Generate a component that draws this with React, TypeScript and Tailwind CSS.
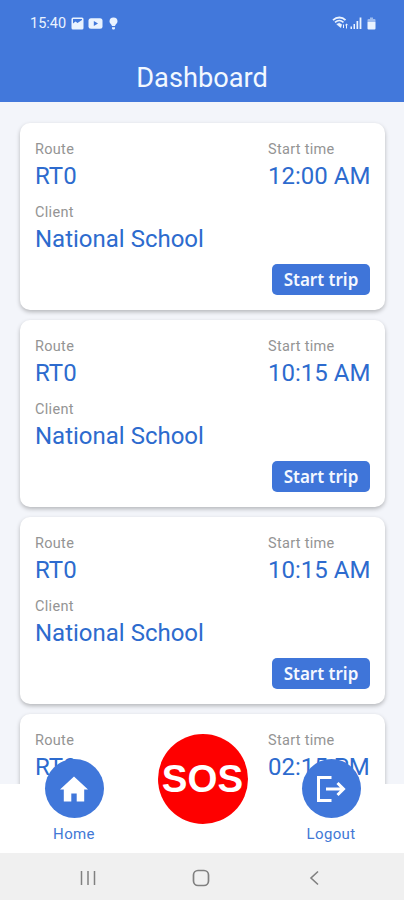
import type { ReactNode } from "react";

type Trip = {
  id: number;
  route: string;
  client: string;
  startTime: string;
};

const TRIPS: Trip[] = [
  { id: 1, route: "RT0", client: "National School", startTime: "12:00 AM" },
  { id: 2, route: "RT0", client: "National School", startTime: "10:15 AM" },
  { id: 3, route: "RT0", client: "National School", startTime: "10:15 AM" },
  { id: 4, route: "RT0", client: "National School", startTime: "02:15 PM" },
];

function StatusBar() {
  return (
    <div className="flex h-[46px] items-center justify-between pl-[30px] pr-[28px] text-[#eaf3ff]">
      <div className="flex items-center">
        <span className="w-[36px] whitespace-nowrap pt-[2px] text-[14.5px] leading-none">
          15:40
        </span>
        {/* gallery */}
        <svg className="ml-[5px]" width="13" height="13" viewBox="0 0 13 13">
          <path
            fill="currentColor"
            fillRule="evenodd"
            d="M2 .5h9A1.5 1.5 0 0 1 12.500 2v9a1.500 1.500 0 0 1-1.500 1.500H2A1.500 1.500 0 0 1 .5 11V2A1.500 1.500 0 0 1 2 .5ZM2 2v4.500L4.500 4.500 6.500 6l4.500-3V2Z"
          />
        </svg>
        {/* video */}
        <svg className="ml-[4px]" width="15" height="11" viewBox="0 0 15 11">
          <rect x="0.500" y="0.200" width="14" height="10.600" rx="2.500" fill="currentColor" />
          <path d="M5.800 3v5l4.200-2.500Z" fill="#4278db" />
        </svg>
        {/* hint */}
        <svg className="ml-[6px]" width="9" height="13" viewBox="0 0 9 13">
          <path
            fill="currentColor"
            d="M4.500.5a4 4 0 0 1 4 4c0 2-2 2.500-2.500 4.500H3C2.500 7 .5 6.500.5 4.500a4 4 0 0 1 4-4ZM3 10.200h3v1.300L5.300 12.500H3.700L3 11.500Z"
          />
        </svg>
      </div>

      <div className="flex items-center">
        {/* wifi */}
        <svg width="17" height="14" viewBox="0 0 17 14" fill="none" stroke="currentColor">
          <path d="M1 4.200c3.800-3.600 9-3.600 12.500 0" strokeWidth="1.800" />
          <path d="M3 6.400c2.600-2.300 5.900-2.300 8.500 0" strokeWidth="1.600" />
          <path d="M7.200 7 4.600 8.200l4.200 3.500 1-3.200Z" fill="currentColor" strokeWidth="0.400" />
          <path d="M11.500 8.500V12M14.500 12.500V8M13.300 9.200 14.500 8l1.200 1.200" strokeWidth="1" />
        </svg>
        {/* signal */}
        <svg className="ml-[1px]" width="12" height="12" viewBox="0 0 12 12" fill="currentColor">
          <rect x="0.500" y="9.500" width="1.500" height="2.500" />
          <rect x="3.500" y="7" width="1.500" height="5" />
          <rect x="6.500" y="4" width="1.700" height="8" />
          <rect x="9.600" y="0.500" width="1.800" height="11.500" />
        </svg>
        {/* battery */}
        <svg className="ml-[5px]" width="9" height="13" viewBox="0 0 9 13" fill="currentColor">
          <path d="M3 .5h3V2h1.500a1 1 0 0 1 1 1v2H.5V3a1 1 0 0 1 1-1H3Z" opacity="0.550" />
          <path d="M.5 5h8v6.500a1 1 0 0 1-1 1h-6a1 1 0 0 1-1-1Z" />
        </svg>
      </div>
    </div>
  );
}

function Field({ label, value }: { label: string; value: string }) {
  return (
    <div>
      <p className="text-[14.5px] leading-[20px] tracking-[0.3px] text-[#949494]">{label}</p>
      <p className="mt-[2px] whitespace-nowrap text-[24px] leading-[28px] text-[#2d6bce]">
        {value}
      </p>
    </div>
  );
}

function TripCard({ trip }: { trip: Trip }) {
  return (
    <article className="h-[187px] shrink-0 rounded-[10px] bg-white px-[15px] pt-[17px] shadow-[0_2px_4px_rgba(0,0,0,0.26)]">
      <div className="flex justify-between">
        <Field label="Route" value={trip.route} />
        <div className="w-[102px]">
          <Field label="Start time" value={trip.startTime} />
        </div>
      </div>
      <div className="mt-[13px]">
        <Field label="Client" value={trip.client} />
      </div>
      <div className="mt-[11px] flex justify-end">
        <button className="h-[31px] w-[98px] rounded-[5px] bg-[#3f75d9] font-['Noto_Sans',sans-serif] text-[17px] font-semibold leading-[31px] whitespace-nowrap text-[#f4f8ff]">
          Start trip
        </button>
      </div>
    </article>
  );
}

function TabButton({ label, children }: { label: string; children: ReactNode }) {
  return (
    <button className="-mt-[25px] flex w-[60px] flex-col items-center text-[#4278d5]">
      <span className="flex size-[59px] items-center justify-center rounded-full bg-[#4077da] text-white">
        {children}
      </span>
      <span className="mt-[6px] text-[15px] leading-[20px] tracking-[0.35px]">{label}</span>
    </button>
  );
}

export default function App() {
  return (
    <div className="flex h-[900px] w-[404px] flex-col overflow-hidden bg-white font-[Roboto,sans-serif]">
      <header className="h-[102px] shrink-0 bg-[#4278db]">
        <StatusBar />
        <h1 className="mt-[14px] text-center text-[27.2px] leading-[36px] text-[#f2f8ff]">
          Dashboard
        </h1>
      </header>

      <main className="flex h-[682px] shrink-0 flex-col gap-[10px] overflow-hidden bg-[#f3f5fa] pt-[21px] pr-[19px] pl-[20px]">
        {TRIPS.map((trip) => (
          <TripCard key={trip.id} trip={trip} />
        ))}
      </main>

      <footer className="relative flex h-[69px] shrink-0 items-start justify-between bg-white pr-[43px] pl-[44px]">
        <TabButton label="Home">
          <svg width="30" height="28" viewBox="0 0 30 28" fill="currentColor">
            <path d="M15 1.500 29 14.500h-3.800V26.500h-7.500v-8h-5.400v8H4.800V14.500H1Z" />
          </svg>
        </TabButton>
        <button className="-mt-[50px] flex size-[90px] items-center justify-center rounded-full bg-[#fe0000] font-['Liberation_Sans',Arial,sans-serif] text-[38.5px] font-bold leading-none text-white">
          SOS
        </button>
        <TabButton label="Logout">
          <svg
            width="32"
            height="30"
            viewBox="0 0 32 30"
            fill="none"
            stroke="currentColor"
            strokeWidth="3"
          >
            <path d="M16.500 3.500H3.500v23h13" />
            <path d="M11 15h18M22.500 9l6 6-6 6" />
          </svg>
        </TabButton>
      </footer>

      <nav className="flex h-[47px] shrink-0 items-center justify-between bg-[#f0f0f0] pt-[3px] pr-[82px] pl-[79.500px] text-[#808080]">
        <svg width="16" height="16" viewBox="0 0 16 16" stroke="currentColor" strokeWidth="1.500">
          <path d="M1.500 1v14M8 1v14M14.500 1v14" />
        </svg>
        <svg width="18" height="18" viewBox="0 0 18 18" fill="none" stroke="currentColor">
          <rect x="1.500" y="1.500" width="15" height="15" rx="4.500" strokeWidth="1.700" />
        </svg>
        <svg width="16" height="16" viewBox="0 0 16 16" fill="none" stroke="currentColor">
          <path d="M12 1.500 5 8l7 6.500" strokeWidth="1.600" />
        </svg>
      </nav>
    </div>
  );
}
